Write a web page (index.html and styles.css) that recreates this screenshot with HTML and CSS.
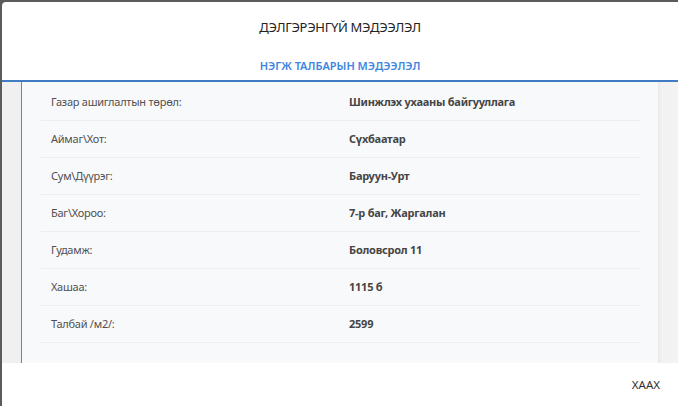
FILE: index.html
```html
<!DOCTYPE html>
<html lang="mn">
<head>
<meta charset="utf-8">
<title>Дэлгэрэнгүй мэдээлэл</title>
<link rel="stylesheet" href="styles.css">
</head>
<body>
<div class="modal">
  <div class="modal-header">
    <h1 class="modal-title">ДЭЛГЭРЭНГҮЙ МЭДЭЭЛЭЛ</h1>
    <div class="tabs"><span class="tab active">НЭГЖ ТАЛБАРЫН МЭДЭЭЛЭЛ</span></div>
  </div>
  <div class="modal-body">
    <div class="gutter"></div>
    <div class="panel">
      <div class="rows">
        <div class="row"><span class="label">Газар ашиглалтын төрөл:</span><span class="value">Шинжлэх ухааны байгууллага</span></div>
        <div class="row"><span class="label">Аймаг\Хот:</span><span class="value">Сүхбаатар</span></div>
        <div class="row"><span class="label">Сум\Дүүрэг:</span><span class="value">Баруун-Урт</span></div>
        <div class="row"><span class="label">Баг\Хороо:</span><span class="value">7-р баг, Жаргалан</span></div>
        <div class="row"><span class="label">Гудамж:</span><span class="value">Боловсрол 11</span></div>
        <div class="row"><span class="label">Хашаа:</span><span class="value">1115 б</span></div>
        <div class="row"><span class="label">Талбай /м2/:</span><span class="value">2599</span></div>
      </div>
    </div>
    <div class="scroll-strip"></div>
  </div>
  <div class="modal-footer">
    <button class="close-btn">ХААХ</button>
  </div>
</div>
</body>
</html>
```
FILE: styles.css
```css
html, body {
  margin: 0;
  padding: 0;
  height: 100%;
  overflow: hidden;
}
body {
  background: #5b5b5b;
  font-family: "Noto Sans", "Open Sans", sans-serif;
}
.modal {
  margin: 2px 0 0 2px;
  height: 404px;
  background: #fff;
  border-top-left-radius: 4px;
  display: flex;
  flex-direction: column;
}
.modal-header {
  height: 78px;
  border-bottom: 2px solid #3f7cc4;
  display: flex;
  flex-direction: column;
  align-items: center;
}
.modal-title {
  margin: 15px 0 0;
  font-size: 13px;
  letter-spacing: -0.3px;
  font-weight: 400;
  color: #222;
  line-height: 20px;
}
.tabs {
  margin-top: 16px;
}
.tab {
  font-size: 11px;
  font-weight: 600;
  color: #3d85e0;
  line-height: 16px;
}
.modal-body {
  height: 281px;
  display: flex;
  background: #f0f0f0;
}
.gutter {
  width: 19px;
  flex: none;
}
.panel {
  width: 637px;
  flex: none;
  background: #f8f9fb;
  border-left: 1px solid #4d8ad8;
  padding: 2px 0 0 19px;
  box-sizing: border-box;
}
.rows {
  width: 599px;
}
.row {
  box-sizing: border-box;
  height: 37px;
  padding-bottom: 2px;
  border-bottom: 1px solid #ebedf0;
  display: flex;
  align-items: center;
  font-size: 11px;
  letter-spacing: -0.25px;
}
.label {
  width: 298px;
  padding-left: 10px;
  color: #505050;
}
.value {
  font-weight: 700;
  color: #454545;
}
.scroll-strip {
  flex: 1;
  background: linear-gradient(to right, #e9e9e9, #f2f2f2 4px, #f3f3f3);
}
.modal-footer {
  flex: 1;
  display: flex;
  justify-content: flex-end;
  align-items: center;
  padding-right: 18px;
}
.close-btn {
  border: none;
  background: none;
  font-family: inherit;
  font-size: 11.5px;
  color: #333;
  padding: 0;
}
```
